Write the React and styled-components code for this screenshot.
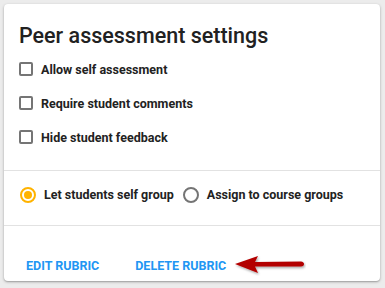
import React, { useState } from 'react';
import styled, { createGlobalStyle } from 'styled-components';

const GlobalStyle = createGlobalStyle`
  html, body {
    margin: 0;
    background: #ececec;
    font-family: Roboto, "Liberation Sans", Arial, sans-serif;
  }
`;

const Page = styled.div`
  padding: 4px 5px 6px 4px;
`;

const Card = styled.div`
  background: #fff;
  border-radius: 4px;
  box-shadow: 0 1px 3px rgba(0, 0, 0, 0.28), 0 1px 1px rgba(0, 0, 0, 0.12);
  overflow: hidden;
`;

const Section = styled.div`
  box-sizing: border-box;
  height: ${(p) => p.h}px;
  padding: ${(p) => p.pad};
  border-bottom: ${(p) => (p.last ? 'none' : '1px solid #e2e2e2')};
  display: flex;
  flex-direction: column;
  justify-content: ${(p) => p.justify || 'flex-start'};
`;

const Title = styled.h2`
  margin: 0 0 1px;
  font-size: 21.5px;
  font-weight: 500;
  color: #212121;
  line-height: 30px;
`;

const CheckRow = styled.label`
  display: flex;
  align-items: center;
  height: 34px;
  gap: 8px;
  cursor: pointer;
`;

const Box = styled.span`
  width: 10px;
  height: 10px;
  border: 2px solid #757575;
  border-radius: 2px;
  flex: none;
  background: ${(p) => (p.checked ? '#757575' : 'transparent')};
`;

const LabelText = styled.span`
  font-size: 12.5px;
  font-weight: 700;
  color: #222;
  line-height: 15px;
`;

const RadioGroup = styled.div`
  display: flex;
  align-items: center;
  gap: 9px;
`;

const RadioRow = styled.label`
  display: flex;
  align-items: center;
  gap: 8px;
  cursor: pointer;
`;

const Circle = styled.span`
  width: 12px;
  height: 12px;
  border: 2px solid ${(p) => (p.checked ? '#ffb300' : '#757575')};
  border-radius: 50%;
  flex: none;
  display: flex;
  align-items: center;
  justify-content: center;
  &::after {
    content: '';
    width: 8px;
    height: 8px;
    border-radius: 50%;
    background: ${(p) => (p.checked ? '#ffb300' : 'transparent')};
  }
`;

const Actions = styled.div`
  display: flex;
  align-items: center;
  gap: 36px;
  padding-left: 22px;
  height: 22px;
`;

const TextButton = styled.button`
  border: none;
  background: none;
  padding: 0;
  font-family: inherit;
  font-size: 12.5px;
  font-weight: 700;
  line-height: 15px;
  text-transform: uppercase;
  color: #2196f3;
  cursor: pointer;
`;

const Arrow = () => (
  <svg width="72" height="22" viewBox="0 0 72 22" style={{ marginLeft: -28 }}>
    <defs>
      <filter id="sh" x="-10%" y="-30%" width="130%" height="170%">
        <feDropShadow dx="1" dy="1.5" stdDeviation="1" floodColor="#000" floodOpacity="0.35" />
      </filter>
    </defs>
    <g filter="url(#sh)">
      <path d="M1 10 L24 2 L21 8 L67 7.5 Q70 8 70 10 Q70 12 67 12.5 L21 12.5 L24 19 Z" fill="#b30000" />
    </g>
  </svg>
);

const checks = ['Allow self assessment', 'Require student comments', 'Hide student feedback'];

export default function App() {
  const [checked, setChecked] = useState([false, false, false]);
  const [group, setGroup] = useState('self');

  return (
    <Page>
      <GlobalStyle />
      <Card>
        <Section h={167} pad="17px 15px 0 15px">
          <Title>Peer assessment settings</Title>
          {checks.map((c, i) => (
            <CheckRow
              key={c}
              onClick={() => setChecked(checked.map((v, j) => (j === i ? !v : v)))}
            >
              <Box checked={checked[i]} />
              <LabelText>{c}</LabelText>
            </CheckRow>
          ))}
        </Section>
        <Section h={55} pad="0 15px 7px 16px" justify="center">
          <RadioGroup>
            <RadioRow onClick={() => setGroup('self')}>
              <Circle checked={group === 'self'} />
              <LabelText>Let students self group</LabelText>
            </RadioRow>
            <RadioRow onClick={() => setGroup('course')}>
              <Circle checked={group === 'course'} />
              <LabelText>Assign to course groups</LabelText>
            </RadioRow>
          </RadioGroup>
        </Section>
        <Section last h={55} pad="0 0 5px 0" justify="flex-end">
          <Actions>
            <TextButton>Edit rubric</TextButton>
            <TextButton>Delete rubric</TextButton>
            <Arrow />
          </Actions>
        </Section>
      </Card>
    </Page>
  );
}
